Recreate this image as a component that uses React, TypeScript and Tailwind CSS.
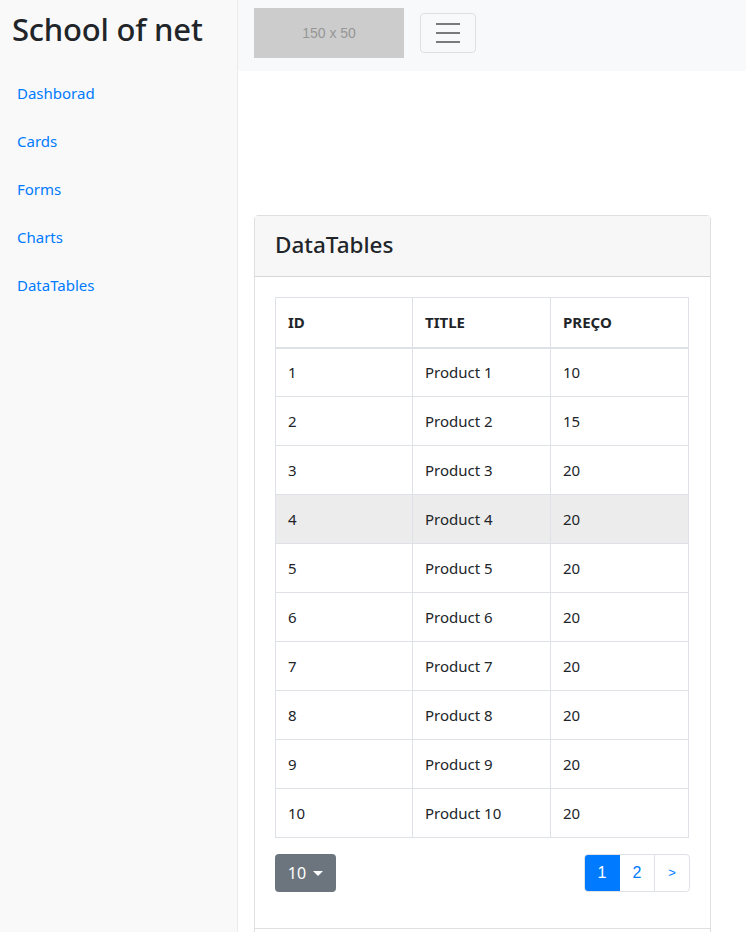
import { useState } from 'react';

const rows = [
  { id: 1, title: 'Product 1', price: 10 },
  { id: 2, title: 'Product 2', price: 15 },
  { id: 3, title: 'Product 3', price: 20 },
  { id: 4, title: 'Product 4', price: 20 },
  { id: 5, title: 'Product 5', price: 20 },
  { id: 6, title: 'Product 6', price: 20 },
  { id: 7, title: 'Product 7', price: 20 },
  { id: 8, title: 'Product 8', price: 20 },
  { id: 9, title: 'Product 9', price: 20 },
  { id: 10, title: 'Product 10', price: 20 },
];

const links = ['Dashborad', 'Cards', 'Forms', 'Charts', 'DataTables'];

export default function App() {
  const [hovered, setHovered] = useState<number | null>(4);

  return (
    <div
      className="flex min-h-[932px] w-[746px] overflow-hidden bg-white text-[#212529]"
      style={{ fontFamily: '"Noto Sans", "Open Sans", sans-serif' }}
    >
      {/* Sidebar */}
      <aside className="w-[238px] shrink-0 border-r border-[#ececec] bg-[#f9f9f9]">
        <h1 className="px-3 pt-[11px] text-[31px] font-medium leading-[1.2] tracking-[-0.2px]">School of net</h1>
        <nav className="mt-[25px] flex flex-col gap-2">
          {links.map((l) => (
            <a key={l} href="#" className="px-[17px] py-2 text-[15px] leading-6 text-[#007bff]">
              {l}
            </a>
          ))}
        </nav>
      </aside>

      {/* Main */}
      <div className="flex min-w-0 flex-1 flex-col">
        <header className="flex h-[71px] items-start gap-4 bg-[#f8f9fa] px-4 pt-2">
          <div className="flex h-[50px] w-[150px] items-center justify-center bg-[#cccccc] text-[14px] text-[#969696]" style={{ fontFamily: '"Liberation Sans", Arial, sans-serif' }}>
            150 x 50
          </div>
          <button className="mt-[5px] flex h-[40px] w-[56px] flex-col items-center justify-center gap-[7px] rounded border border-black/10">
            <span className="block h-[2px] w-[24px] bg-[#7a7a7a]" />
            <span className="block h-[2px] w-[24px] bg-[#7a7a7a]" />
            <span className="block h-[2px] w-[24px] bg-[#7a7a7a]" />
          </button>
        </header>

        <div className="px-4 pt-[144px]">
          <div className="w-[457px] rounded border border-black/[0.125]">
            <div className="flex h-[61px] items-center border-b border-black/[0.125] bg-[#f7f7f7] px-5">
              <h4 className="-mt-[3px] text-[22.5px] font-medium leading-[1.2]">DataTables</h4>
            </div>
            <div className="px-5 pb-[36px] pt-5">
              <table className="w-[414px] table-fixed border-collapse text-[15px]">
                <thead>
                  <tr>
                    <th className="h-[50px] w-[137px] border border-b-2 border-[#dee2e6] px-3 text-left font-bold">ID</th>
                    <th className="w-[138px] border border-b-2 border-[#dee2e6] px-3 text-left font-bold">TITLE</th>
                    <th className="border border-b-2 border-[#dee2e6] px-3 text-left font-bold">PREÇO</th>
                  </tr>
                </thead>
                <tbody>
                  {rows.map((r) => (
                    <tr
                      key={r.id}
                      onMouseEnter={() => setHovered(r.id)}
                      className={hovered === r.id ? 'bg-[#ececec]' : ''}
                    >
                      <td className="h-[49px] border border-[#dee2e6] px-3">{r.id}</td>
                      <td className="border border-[#dee2e6] px-3">{r.title}</td>
                      <td className="border border-[#dee2e6] px-3">{r.price}</td>
                    </tr>
                  ))}
                </tbody>
              </table>

              <div className="mt-4 flex items-center justify-between">
                <button className="flex h-[38px] w-[61px] items-center justify-center gap-[7px] rounded bg-[#6c757d] text-[16px] text-white">
                  10
                  <span className="mt-[1px] h-0 w-0 border-x-[5px] border-t-[5px] border-x-transparent border-t-white" />
                </button>
                <div className="flex h-[38px] overflow-hidden rounded border border-[#dee2e6] text-[16px]" style={{ fontFamily: '"Liberation Sans", Arial, sans-serif' }}>
                  <a href="#" className="-my-px -ml-px flex w-[36px] items-center justify-center bg-[#007bff] text-white">1</a>
                  <a href="#" className="flex w-[34px] items-center justify-center text-[#007bff]">2</a>
                  <a href="#" className="flex w-[35px] items-center justify-center border-l border-[#dee2e6] text-[13px] text-[#007bff]">&gt;</a>
                </div>
              </div>
            </div>
            <div className="h-[20px] border-t border-black/[0.125]" />
          </div>
        </div>
      </div>
    </div>
  );
}
